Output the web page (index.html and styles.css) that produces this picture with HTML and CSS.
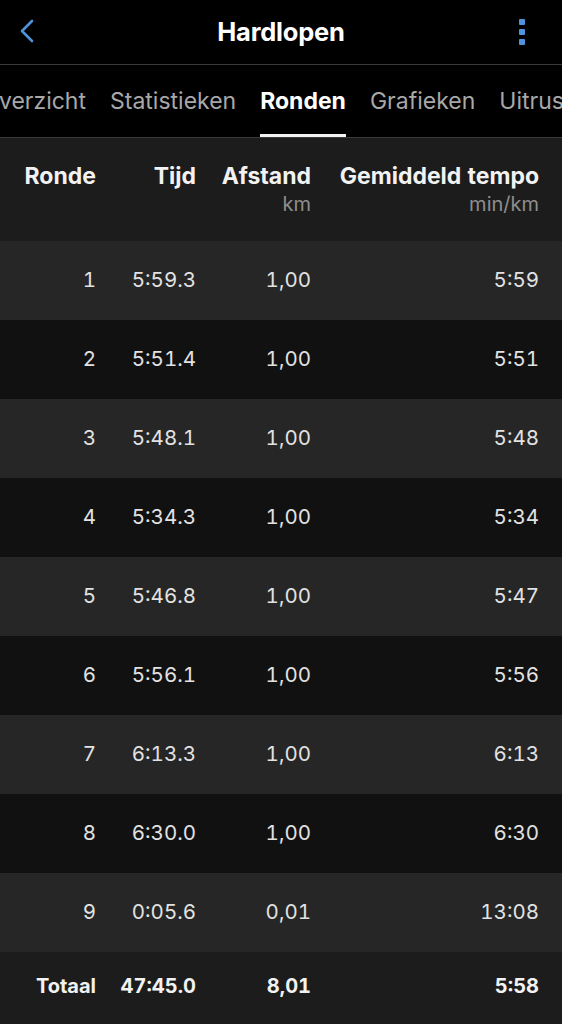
FILE: index.html
```html
<!DOCTYPE html>
<html lang="nl">
<head>
<meta charset="utf-8">
<link rel="stylesheet" href="styles.css">
</head>
<body>
<div class="app">
  <header class="nav">
    <svg class="back" width="16" height="24" viewBox="0 0 16 24"><path d="M13 2 L3 12 L13 22" fill="none" stroke="#4f93dc" stroke-width="2.6" stroke-linecap="round" stroke-linejoin="round"/></svg>
    <h1 class="title">Hardlopen</h1>
    <div class="more"><span></span><span></span><span></span></div>
  </header>
  <nav class="tabs">
    <div class="tab-track">
      <span class="tab first"><span>Overzicht</span></span>
      <span class="tab">Statistieken</span>
      <span class="tab active">Ronden</span>
      <span class="tab">Grafieken</span>
      <span class="tab">Uitrusting</span>
    </div>
  </nav>
  <div class="table">
    <div class="row head">
      <div class="c c1"><b>Ronde</b></div>
      <div class="c c2"><b>Tijd</b></div>
      <div class="c c3"><b>Afstand</b><small>km</small></div>
      <div class="c c4"><b>Gemiddeld tempo</b><small>min/km</small></div>
    </div>
    <div class="row odd"><div class="c c1">1</div><div class="c c2">5:59.3</div><div class="c c3">1,00</div><div class="c c4">5:59</div></div>
    <div class="row even"><div class="c c1">2</div><div class="c c2">5:51.4</div><div class="c c3">1,00</div><div class="c c4">5:51</div></div>
    <div class="row odd"><div class="c c1">3</div><div class="c c2">5:48.1</div><div class="c c3">1,00</div><div class="c c4">5:48</div></div>
    <div class="row even"><div class="c c1">4</div><div class="c c2">5:34.3</div><div class="c c3">1,00</div><div class="c c4">5:34</div></div>
    <div class="row odd"><div class="c c1">5</div><div class="c c2">5:46.8</div><div class="c c3">1,00</div><div class="c c4">5:47</div></div>
    <div class="row even"><div class="c c1">6</div><div class="c c2">5:56.1</div><div class="c c3">1,00</div><div class="c c4">5:56</div></div>
    <div class="row odd"><div class="c c1">7</div><div class="c c2">6:13.3</div><div class="c c3">1,00</div><div class="c c4">6:13</div></div>
    <div class="row even"><div class="c c1">8</div><div class="c c2">6:30.0</div><div class="c c3">1,00</div><div class="c c4">6:30</div></div>
    <div class="row odd"><div class="c c1">9</div><div class="c c2">0:05.6</div><div class="c c3">0,01</div><div class="c c4">13:08</div></div>
    <div class="row total"><div class="c c1">Totaal</div><div class="c c2">47:45.0</div><div class="c c3">8,01</div><div class="c c4">5:58</div></div>
  </div>
</div>
</body>
</html>
```
FILE: styles.css
```css
* { box-sizing: border-box; }
html, body { margin: 0; padding: 0; background: #000; }
body { font-family: "Inter", "Roboto", "Liberation Sans", sans-serif; color: #e2e2e2; }
.app { width: 562px; height: 1024px; overflow: hidden; background: #000; }

.nav {
  height: 65px;
  display: flex;
  align-items: center;
  justify-content: center;
  position: relative;
  border-bottom: 1px solid #3a3a3a;
  padding-bottom: 2px;
}
.back { position: absolute; left: 19px; top: 19px; }
.title { margin: 0; font-size: 25.5px; font-weight: 700; color: #fff; letter-spacing: -0.2px; }
.more { position: absolute; left: 519px; top: 19px; display: flex; flex-direction: column; gap: 4px; }
.more span { width: 6px; height: 6px; background: #4f93dc; border-radius: 1px; }

.tabs {
  height: 73px;
  overflow: hidden;
  border-bottom: 1px solid #3a3a3a;
}
.tab-track {
  display: flex;
  gap: 24px;
  height: 100%;
  white-space: nowrap;
}
.tab {
  font-size: 23px;
  color: #a8a8a8;
  padding-top: 22px;
  height: 100%;
  position: relative;
  flex-shrink: 0;
}
.tab.first { width: 86px; display: flex; justify-content: flex-end; }
.tab.active { color: #fff; font-weight: 700; }
.tab.active::after {
  content: "";
  position: absolute;
  left: 0; right: 0; bottom: 0;
  height: 3px;
  background: #f2f2f2;
}

.table { display: flex; flex-direction: column; }
.row {
  display: grid;
  grid-template-columns: 96px 100px 115px 228px;
  height: 79px;
  align-items: center;
  font-size: 20.5px;
  font-variant-numeric: tabular-nums;
  padding-bottom: 3px;
}
.row.odd { background: #262626; }
.row.even { background: #111111; }
.row.head { height: 103px; background: #1c1c1c; align-items: start; padding-top: 24px; }
.row.total { background: #1c1c1c; height: 74px; font-weight: 700; color: #f2f2f2; font-size: 20px; padding-bottom: 6px; }
.c { text-align: right; display: flex; flex-direction: column; align-items: flex-end; white-space: nowrap; }
.head b { font-size: 23px; font-weight: 700; color: #f2f2f2; line-height: 28px; }
.head small { font-size: 20px; color: #8e8e8e; margin-top: 2px; }
```
